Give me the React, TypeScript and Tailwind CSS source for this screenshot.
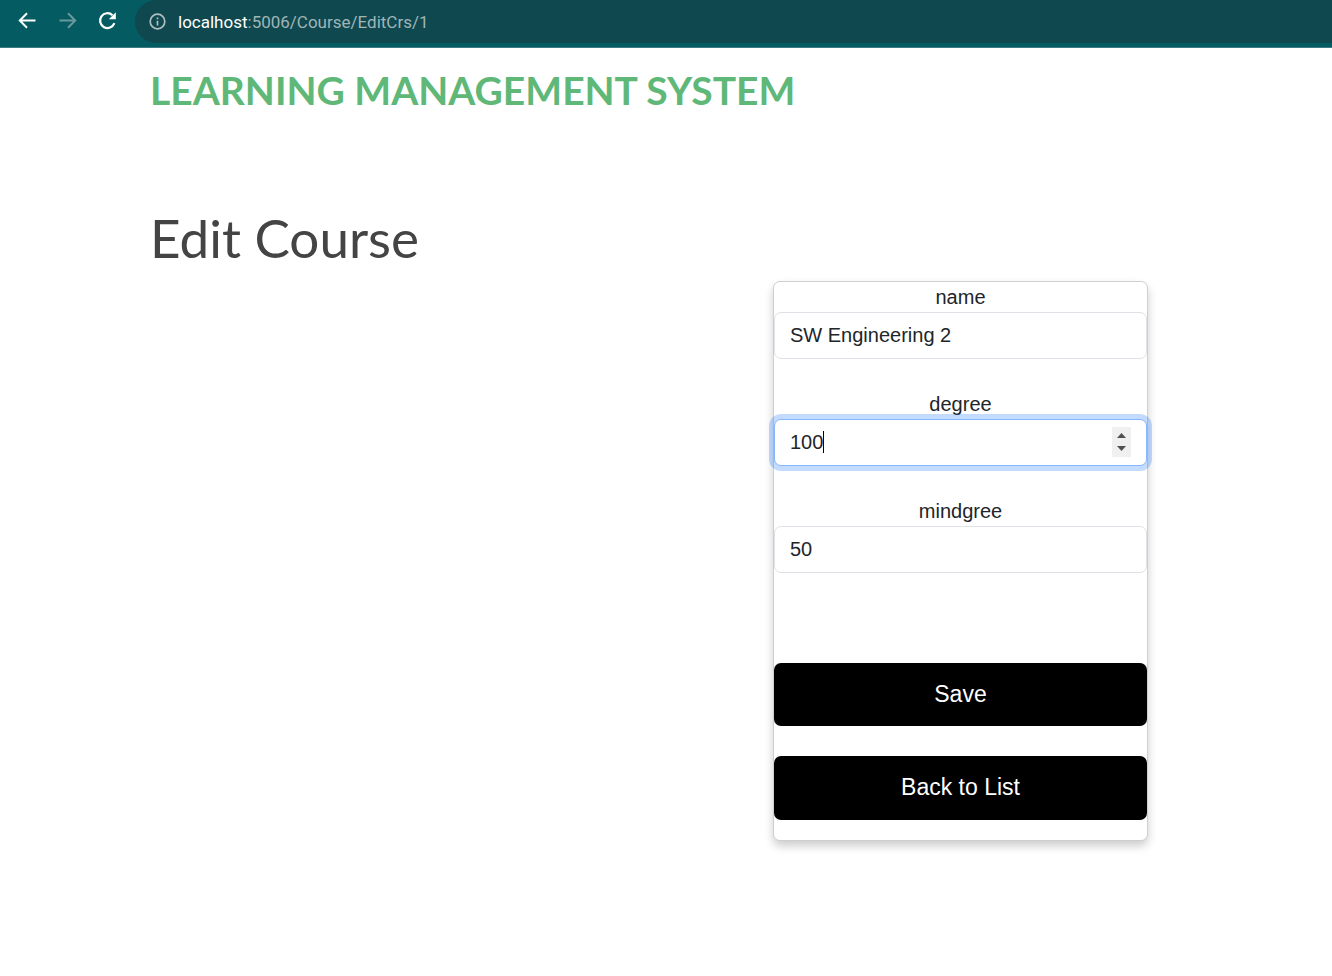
import { useState } from "react";

function BrowserBar() {
  return (
    <header className="flex h-12 items-start overflow-hidden border-b border-[#3b7d82] bg-[#045b61] font-['Roboto',sans-serif]">
      <nav aria-label="Browser" className="flex h-[42px] w-[135px] shrink-0 items-center gap-4 pl-[15px]">
        <button type="button" aria-label="Back" className="text-white">
          <svg width="24" height="24" viewBox="0 0 24 24" fill="none" stroke="currentColor" strokeWidth="2">
            <path d="M20.5 11.5H5M12 4.2L4.8 11.5l7.2 7.3" />
          </svg>
        </button>
        <button type="button" aria-label="Forward" disabled className="text-[#68999d]">
          <svg width="24" height="24" viewBox="0 0 24 24" fill="none" stroke="currentColor" strokeWidth="2">
            <path d="M4.5 11.5H20M13 4.2l7.2 7.3-7.2 7.3" />
          </svg>
        </button>
        <button type="button" aria-label="Reload" className="text-white">
          <svg width="24" height="24" viewBox="0 0 24 24" fill="none" stroke="currentColor" strokeWidth="2.2">
            <path d="M19.4 14.2a7.4 7.4 0 1 1-1.9-8" />
            <path d="M20.8 3.2v7h-7z" fill="currentColor" stroke="none" />
          </svg>
        </button>
      </nav>
      <div className="flex h-[43px] flex-1 items-center gap-3 rounded-l-full bg-[#0f484e] pl-[14px]">
        <svg width="17" height="17" viewBox="0 0 17 17" fill="none" stroke="#aebfc1" strokeWidth="1.7">
          <circle cx="8.5" cy="8.5" r="7.3" />
          <path d="M8.5 7.7v4.8M8.5 4.4v1.8" />
        </svg>
        <a href="#address" className="text-[17px] leading-6 text-[#9fb6b8]">
          <span className="text-white">localhost</span>:5006/Course/EditCrs/1
        </a>
      </div>
    </header>
  );
}

const labelClass = "block text-center text-[20px] leading-[30px]";
const inputClass =
  "block h-[47px] w-full appearance-none rounded-[7px] border bg-white px-[15px] text-[20px] leading-[30px] outline-none [&::-webkit-inner-spin-button]:appearance-none";

function CourseForm() {
  const [name, setName] = useState("SW Engineering 2");
  const [degree, setDegree] = useState(100);
  const [minDegree, setMinDegree] = useState(50);

  return (
    <form
      onSubmit={(e) => e.preventDefault()}
      className="w-full max-w-[375px] rounded-[7px] border border-[#cfcfcf] bg-white pb-5 text-[#212529] shadow-[0_5px_10px_rgba(0,0,0,0.2)]"
    >
      <div className="flex flex-col gap-[30px]">
        <div>
          <label htmlFor="name" className={labelClass}>name</label>
          <input
            id="name"
            type="text"
            value={name}
            onChange={(e) => setName(e.target.value)}
            className={`${inputClass} border-[#dee2e6]`}
          />
        </div>
        <div>
          <label htmlFor="degree" className={labelClass}>degree</label>
          <div className="relative">
            <input
              id="degree"
              type="number"
              value={degree}
              onChange={(e) => setDegree(Number(e.target.value))}
              className={`${inputClass} border-[#86b7fe] caret-transparent shadow-[0_0_0_5px_rgba(13,110,253,0.25)]`}
            />
            <span className="absolute top-3 left-[49px] h-[22px] w-px bg-black" />
            <div className="absolute top-2 right-4 flex h-[30px] w-[19px] flex-col bg-[#f0f0f0] text-[#505050]">
              <button
                type="button"
                aria-label="Increase degree"
                onClick={() => setDegree(degree + 1)}
                className="flex flex-1 items-end justify-center pb-1"
              >
                <svg width="9" height="5" viewBox="0 0 9 5" fill="currentColor"><path d="M0 5L4.5 0 9 5z" /></svg>
              </button>
              <button
                type="button"
                aria-label="Decrease degree"
                onClick={() => setDegree(degree - 1)}
                className="flex flex-1 items-start justify-center pt-1"
              >
                <svg width="9" height="5" viewBox="0 0 9 5" fill="currentColor"><path d="M0 0l4.5 5L9 0z" /></svg>
              </button>
            </div>
          </div>
        </div>
        <div>
          <label htmlFor="mindgree" className={labelClass}>mindgree</label>
          <input
            id="mindgree"
            type="number"
            value={minDegree}
            onChange={(e) => setMinDegree(Number(e.target.value))}
            className={`${inputClass} border-[#dee2e6]`}
          />
        </div>
      </div>
      <div className="mt-[90px] flex flex-col gap-[30px] text-[23px] leading-8 text-white">
        <button type="submit" className="h-[63px] rounded-[7px] bg-black pb-0.5">Save</button>
        <a href="#list" className="flex h-[64px] items-center justify-center rounded-[7px] bg-black pb-0.5">Back to List</a>
      </div>
    </form>
  );
}

export default function App() {
  return (
    <div className="min-h-screen bg-white font-['Liberation_Sans',Arial,sans-serif]">
      <BrowserBar />
      <main className="mx-auto max-w-[1182px] px-[75px] pt-[18px]">
        <a href="#home" className="block font-['Lato',sans-serif] text-[39px] leading-[48px] font-bold text-[#5fb878]">
          LEARNING MANAGEMENT SYSTEM
        </a>
        <h1 className="mt-24 font-['Lato',sans-serif] text-[53px] leading-[56px] text-[#444444]">Edit Course</h1>
        <div className="mt-[15px] flex justify-end pr-[34px]">
          <CourseForm />
        </div>
      </main>
    </div>
  );
}
